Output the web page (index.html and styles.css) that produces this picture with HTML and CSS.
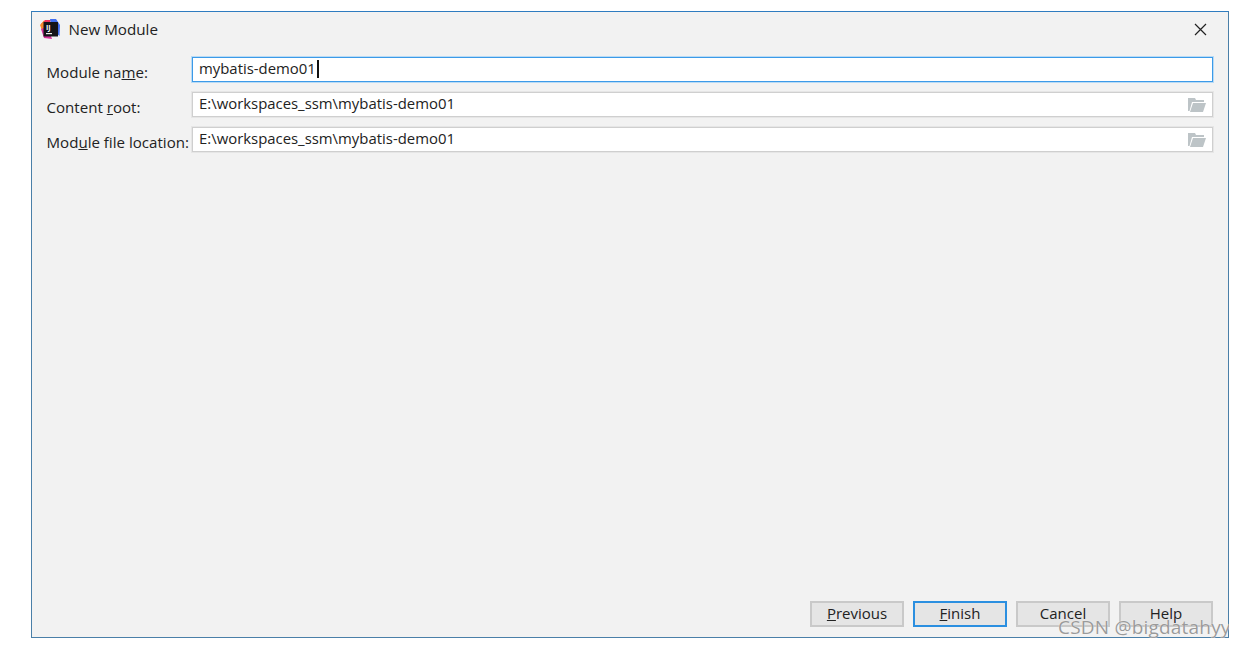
FILE: index.html
```html
<!DOCTYPE html>
<html lang="en">
<head>
  <meta charset="UTF-8" />
  <title>New Module</title>
  <link rel="stylesheet" href="styles.css">
</head>
<body>
  <div class="dialog">
    <div class="titlebar">
      <svg class="app-icon" width="20" height="20" viewBox="0 0 20 20">
        <path d="M1 5 L5 1 L11 1 L8 8 L2 12 Z" fill="#f0325a"/>
        <path d="M0 6 L4 1.5 L5 9 L1.5 10 Z" fill="#f58a2c"/>
        <path d="M10 0 L16 0 L20 6 L19.5 17 L12 10 Z" fill="#3f6df0"/>
        <path d="M1 10 L4 19 L12 20 L8 8 Z" fill="#d6309a"/>
        <rect x="3.5" y="3" width="14.5" height="14.5" fill="#141418"/>
        <text class="app-icon-text" x="6" y="10.5">IJ</text>
        <rect x="6" y="14" width="6" height="1.2" fill="#eee"/>
      </svg>
      <span class="title">New Module</span>
      <svg class="close" width="13" height="13" viewBox="0 0 13 13">
        <path d="M1 1 L12 12 M12 1 L1 12" stroke="#222" stroke-width="1.2" fill="none"/>
      </svg>
    </div>

    <div class="form">
      <label class="label">Module na<u>m</u>e:</label>
      <div class="field focused"><span>mybatis-demo01</span><i class="caret"></i></div>

      <label class="label">Content <u>r</u>oot:</label>
      <div class="field">
        <span>E:\workspaces_ssm\mybatis-demo01</span>
        <svg class="folder" width="18" height="14" viewBox="0 0 18 14">
          <path d="M0 0 H7 L8 2 H16 V4 H4 L1.5 13 H0 Z" fill="#bdc4c7"/>
          <path d="M5 5 H18 L15 14 H2 Z" fill="#bdc4c7"/>
        </svg>
      </div>

      <label class="label">Mod<u>u</u>le file location:</label>
      <div class="field">
        <span>E:\workspaces_ssm\mybatis-demo01</span>
        <svg class="folder" width="18" height="14" viewBox="0 0 18 14">
          <path d="M0 0 H7 L8 2 H16 V4 H4 L1.5 13 H0 Z" fill="#bdc4c7"/>
          <path d="M5 5 H18 L15 14 H2 Z" fill="#bdc4c7"/>
        </svg>
      </div>
    </div>

    <div class="buttons">
      <button class="btn"><u>P</u>revious</button>
      <button class="btn primary"><u>F</u>inish</button>
      <button class="btn">Cancel</button>
      <button class="btn">Help</button>
    </div>
  </div>
  <div class="watermark">CSDN @bigdatahyy</div>
</body>
</html>
```

FILE: styles.css
```css
body {
  margin: 0;
  padding: 11px 0 0 31px;
  background: #fff;
  font-family: "Open Sans", sans-serif;
  color: #222;
  width: 1198px;
  position: relative;
}

.dialog {
  box-sizing: border-box;
  width: 1198px;
  height: 627px;
  background: #f2f2f2;
  border: 1px solid #4a7fa8;
  border-top-color: #2f7cc0;
  display: flex;
  flex-direction: column;
  padding: 0 15px 10px 14.5px;
}

.titlebar {
  display: flex;
  align-items: center;
  height: 33px;
  margin-bottom: 12px;
}

.app-icon {
  margin-left: -7px;
  margin-right: 9px;
}

.app-icon-text {
  font-size: 7px;
  font-weight: bold;
  fill: #fff;
}

.title {
  font-size: 15.2px;
  flex: 1;
}

.close {
  margin-right: 6px;
  margin-top: 2px;
}

.form {
  display: grid;
  grid-template-columns: 145.5px 1fr;
  row-gap: 10px;
}

.label {
  font-size: 15.1px;
  line-height: 25px;
  padding-top: 3px;
  height: 22px;
  white-space: nowrap;
}

.field {
  box-sizing: border-box;
  height: 25px;
  background: #fff;
  border: 1px solid #cfcfcf;
  box-shadow: 0 0 0 1px #e6e6e6;
  display: flex;
  align-items: center;
  padding: 0 7px 4px 6px;
  font-size: 14.9px;
}

.field span {
  flex: 1;
}

.field.focused {
  border: 1px solid #3c9ae8;
  box-shadow: 0 0 0 1px #b9dbf5;
}

.field.focused span {
  flex: none;
  margin-right: 1px;
}

.caret {
  width: 2px;
  height: 18px;
  background: #111;
  margin-top: 3px;
}

.folder {
  margin-right: -1px;
  margin-top: 4px;
}

.buttons {
  margin-top: auto;
  display: flex;
  justify-content: flex-end;
  gap: 9px;
}

.btn {
  box-sizing: border-box;
  width: 94px;
  height: 26px;
  background: #e5e5e5;
  border: 2px solid #c9c9c9;
  font-family: inherit;
  font-size: 15px;
  line-height: 18px;
  color: #222;
  padding: 0 0 2px;
}

.btn.primary {
  border-color: #2b8fe0;
}

.watermark {
  position: absolute;
  left: 1058px;
  top: 614px;
  font-size: 19px;
  color: #9a9a9a;
  letter-spacing: 0.2px;
  white-space: nowrap;
  text-shadow: 0 0 1px #fff;
}
```
